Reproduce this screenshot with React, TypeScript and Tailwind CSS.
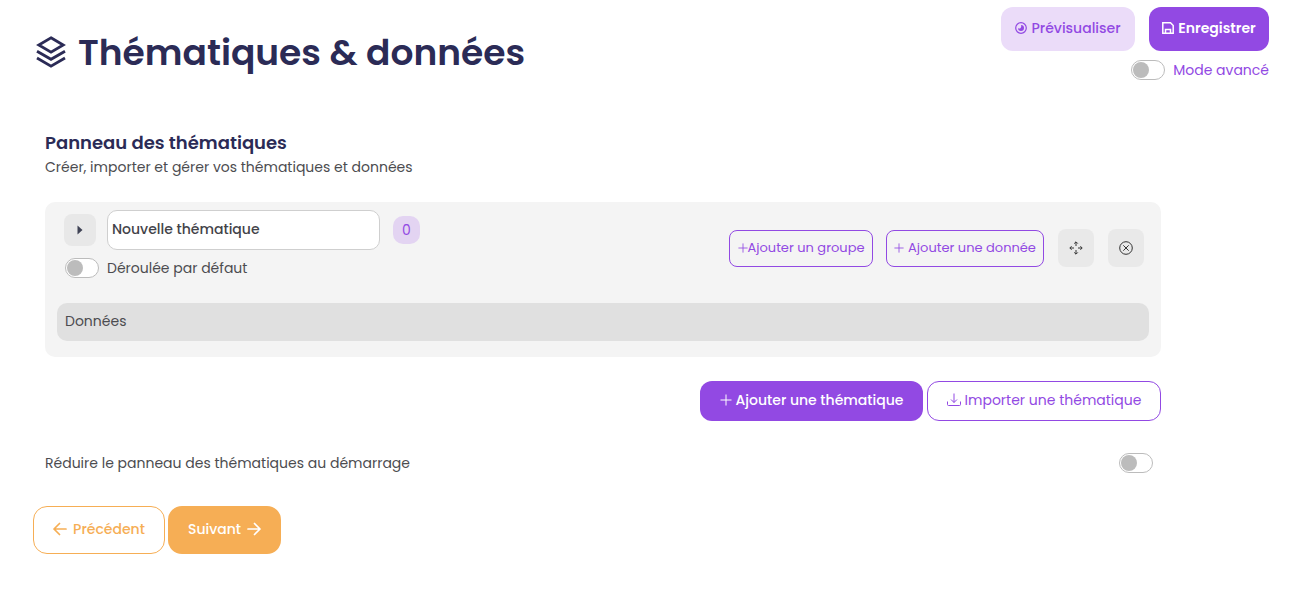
import React, { useState } from 'react';

interface IconProps {
    className?: string;
}

interface ToggleProps {
    id: string;
}

const PlusIcon = ({ className }: IconProps) => (
    <svg viewBox="0 0 12 12" className={className} fill="none" stroke="currentColor" aria-hidden="true">
        <path d="M6 .5v11M.5 6h11" />
    </svg>
);

const StackIcon = () => (
    <svg viewBox="0 0 30 32" className="h-8 w-[30px] shrink-0" fill="none" stroke="currentColor" strokeWidth="2.800" aria-hidden="true">
        <path d="M15 1.800 27.200 9 15 16.200 2.800 9z" />
        <path d="M1 15.200 15 23.300l14-8.100M1 22 15 30.100 29 22" />
    </svg>
);

const PreviewIcon = () => (
    <svg viewBox="0 0 12 12" className="h-3 w-3" fill="none" stroke="currentColor" strokeWidth="1.200" aria-hidden="true">
        <circle cx="6" cy="6" r="5.300" />
        <path d="M6 3a3 3 0 1 1-3 3c.6.6 1.700.7 2.400.2C6.200 5.500 6.500 4.200 6 3z" fill="currentColor" stroke="none" />
    </svg>
);

const SaveIcon = () => (
    <svg viewBox="0 0 12 12" className="h-3 w-3" fill="none" stroke="currentColor" strokeWidth="1.500" aria-hidden="true">
        <path d="M.8.8h7.700l2.700 2.700v7.700H.8z" />
        <path d="M3.500 11V7.500h5V11" />
    </svg>
);

const DownloadIcon = () => (
    <svg viewBox="0 0 14 14" className="h-3.5 w-3.5" fill="none" stroke="currentColor" aria-hidden="true">
        <path d="M.5 8.500v3q0 1 1 1h11q1 0 1-1v-3M7 .5v9M4 6.500l3 3 3-3" />
    </svg>
);

const MoveIcon = () => (
    <svg viewBox="0 0 14 14" className="h-3.5 w-3.5" fill="none" stroke="currentColor" aria-hidden="true">
        <path d="M7 5V1M7 9v4M5 7H1M9 7h4" />
        <path d="M5.200 2.600 7 .8l1.800 1.800M5.200 11.400 7 13.200l1.800-1.800M2.600 5.200.8 7l1.800 1.800M11.400 5.200 13.200 7l-1.800 1.800" />
    </svg>
);

const CloseIcon = () => (
    <svg viewBox="0 0 14 14" className="h-3.5 w-3.5" fill="none" stroke="currentColor" aria-hidden="true">
        <circle cx="7" cy="7" r="6.300" />
        <path d="m4.300 4.300 5.400 5.400M9.700 4.300 4.300 9.700" />
    </svg>
);

const ArrowIcon = ({ className }: IconProps) => (
    <svg viewBox="0 0 14 14" className={className} fill="none" stroke="currentColor" strokeWidth="1.700" strokeLinecap="round" strokeLinejoin="round" aria-hidden="true">
        <path d="M1 7h12M7.500 1.500 13 7l-5.500 5.500" />
    </svg>
);

const Toggle = ({ id }: ToggleProps) => (
    <input
        id={id}
        type="checkbox"
        className="flex h-5 w-[34px] shrink-0 cursor-pointer appearance-none items-center rounded-full border border-[#bcbcbc] bg-white px-px before:h-4 before:w-4 before:rounded-full before:bg-[#bcbcbc] checked:justify-end checked:border-[#9249e3] checked:before:bg-[#9249e3]"
    />
);

const ThemePanel = () => {
    const [name, setName] = useState('Nouvelle thématique');

    return (
        <div className="mt-[23px] rounded-[10px] bg-[#f4f4f4] px-3 pt-2 pb-4">
            <div className="flex items-center justify-between">
                <div className="pb-2 pl-[7px]">
                    <div className="flex items-center">
                        <button aria-label="Dérouler" className="flex h-8 w-8 items-center justify-center rounded-lg bg-[#e8e8e8]">
                            <svg viewBox="0 0 6 10" className="h-2.5 w-1.5" fill="#3f4254" aria-hidden="true">
                                <path d="M.5.5 5.500 5 .5 9.500z" />
                            </svg>
                        </button>
                        <input
                            type="text"
                            aria-label="Nom de la thématique"
                            value={name}
                            onChange={(e) => setName(e.target.value)}
                            className="ml-[11px] h-10 w-[273px] rounded-[10px] border border-[#cfcfcf] bg-white px-1 pb-0.5 font-medium text-[#434349]"
                        />
                        <span className="ml-[13px] flex h-7 w-[27px] items-center justify-center rounded-[10px] bg-[#e3d4f2] text-[#9249e3]">
                            0
                        </span>
                    </div>
                    <div className="mt-2 flex h-5 items-center gap-2 pl-px">
                        <Toggle id="unfolded" />
                        <label htmlFor="unfolded">Déroulée par défaut</label>
                    </div>
                </div>

                <div className="flex items-center gap-3.5 pr-[5px]">
                    <div className="flex gap-[13px]">
                        <button className="flex h-[37px] w-36 items-center justify-center rounded-lg border border-[#9249e3] text-[13px] text-[#9249e3]">
                            <PlusIcon className="h-2.5 w-2.5" />
                            Ajouter un groupe
                        </button>
                        <button className="flex h-[37px] w-[158px] items-center justify-center gap-1 rounded-lg border border-[#9249e3] text-[13px] text-[#9249e3]">
                            <PlusIcon className="h-2.5 w-2.5" />
                            Ajouter une donnée
                        </button>
                    </div>
                    <button aria-label="Déplacer" className="flex h-[38px] w-9 items-center justify-center rounded-lg bg-[#e9e9e9] text-[#333]">
                        <MoveIcon />
                    </button>
                    <button aria-label="Supprimer" className="flex h-[38px] w-9 items-center justify-center rounded-lg bg-[#e9e9e9] text-[#333]">
                        <CloseIcon />
                    </button>
                </div>
            </div>

            <div className="mt-[17px] flex h-[38px] items-center rounded-[10px] bg-[#e0e0e0] px-2 pb-0.5">Données</div>
        </div>
    );
};

const App = () => (
    <div className="bg-white font-['Poppins','Inter',sans-serif] text-sm leading-6 text-[#4c4c50]">
        <header className="flex justify-between pt-[7px] pr-[29px] pl-9">
            <h1 className="flex h-[72px] items-center gap-3 pt-[18px] text-4xl leading-[48px] font-semibold text-[#2b2b56]">
                <StackIcon />
                <span className="pt-0.5">Thématiques &amp; données</span>
            </h1>
            <div className="flex flex-col items-end">
                <div className="flex gap-3.5">
                    <button className="flex h-11 w-[134px] items-center justify-center gap-1 rounded-xl bg-[#ebdcf9] pb-0.5 font-medium text-[#9249e3]">
                        <PreviewIcon />
                        Prévisualiser
                    </button>
                    <button className="flex h-11 w-[120px] items-center justify-center gap-1 rounded-xl bg-[#9249e3] pb-0.5 font-semibold text-white">
                        <SaveIcon />
                        Enregistrer
                    </button>
                </div>
                <div className="mt-[9px] flex h-5 items-center gap-2 text-[#9249e3]">
                    <Toggle id="advanced" />
                    <label htmlFor="advanced">Mode avancé</label>
                </div>
            </div>
        </header>

        <main className="mt-[51px] pr-[137px] pl-[45px]">
            <h2 className="text-lg leading-6 font-semibold text-[#2b2b56]">Panneau des thématiques</h2>
            <p>Créer, importer et gérer vos thématiques et données</p>

            <ThemePanel />

            <div className="mt-6 flex justify-end gap-1">
                <button className="flex h-10 w-[223px] items-center justify-center gap-1 rounded-xl bg-[#9249e3] pb-0.5 font-medium text-white">
                    <PlusIcon className="h-3 w-3" />
                    Ajouter une thématique
                </button>
                <button className="flex h-10 w-[234px] items-center justify-center gap-1 rounded-xl border border-[#9249e3] pb-0.5 text-[#9249e3]">
                    <DownloadIcon />
                    Importer une thématique
                </button>
            </div>

            <div className="mt-8 flex h-5 items-center justify-between pr-2">
                <label htmlFor="collapse">Réduire le panneau des thématiques au démarrage</label>
                <Toggle id="collapse" />
            </div>
        </main>

        <nav className="mt-[33px] flex gap-[3px] pl-[33px]">
            <button className="flex h-12 w-[132px] items-center justify-center gap-1.5 rounded-[14px] border border-[#f6ae55] pb-0.5 font-medium text-[#f6ae55]">
                <ArrowIcon className="h-3.5 w-3.5 rotate-180" />
                Précédent
            </button>
            <button className="flex h-12 w-[113px] items-center justify-center gap-1.5 rounded-[14px] bg-[#f6ae55] pb-0.5 font-medium text-white">
                Suivant
                <ArrowIcon className="h-3.5 w-3.5" />
            </button>
        </nav>
    </div>
);

export default App;
